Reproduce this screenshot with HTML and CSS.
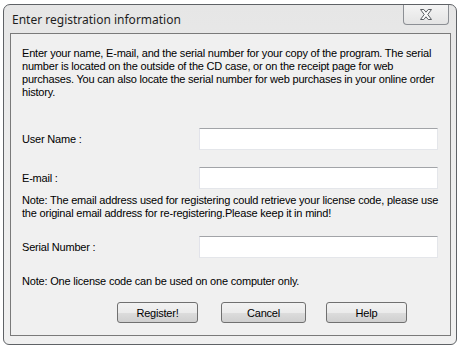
FILE: index.html
```html
<!DOCTYPE html>
<html>
<head>
    <title>Enter registration information</title>
    <link rel="stylesheet" href="styles.css">
</head>
<body>
    <div class="window">
        <div class="titlebar">
            <span class="title">Enter registration information</span>
            <div class="close-btn">
                <svg width="14" height="11" viewBox="0 0 14 11">
                    <path d="M1.5 0.5 H4.8 L7 3.2 L9.2 0.5 H12.5 L8.8 5.5 L12.5 10.5 H9.2 L7 7.8 L4.8 10.5 H1.5 L5.2 5.5 Z" fill="#fafafa" stroke="#5a5e63" stroke-width="1"/>
                </svg>
            </div>
        </div>

        <div class="client">
            <p class="intro">Enter your name, E-mail, and the serial number for your copy of the program. The serial number is located on the outside of the CD case, or on the receipt page for web purchases. You can also locate the serial number for web purchases in your online order history.</p>

            <div class="field-row first">
                <label for="username">User Name :</label>
                <input type="text" id="username">
            </div>

            <div class="field-row">
                <label for="email">E-mail :</label>
                <input type="text" id="email">
            </div>
            <p class="note">Note: The email address used for registering could retrieve your license code, please use the original email address for re-registering.Please keep it in mind!</p>

            <div class="field-row serial">
                <label for="serial">Serial Number :</label>
                <input type="text" id="serial">
            </div>
            <p class="note single">Note: One license code can be used on one computer only.</p>

            <div class="buttons">
                <button class="btn-register">Register!</button>
                <button class="btn-cancel">Cancel</button>
                <button class="btn-help">Help</button>
            </div>
        </div>
    </div>
</body>
</html>
```

FILE: styles.css
```css
body {
    margin: 0;
    background-color: #fff;
    font-family: "Liberation Sans", Arial, sans-serif;
    font-size: 11px;
    letter-spacing: -0.2px;
    color: #000;
}
.window {
    margin: 4px 0 0 3px;
    width: 454px;
    height: 341px;
    box-sizing: border-box;
    border: 1px solid #5f6266;
    border-radius: 7px 7px 6px 6px;
    background: linear-gradient(to bottom, #e6e6e6 0%, #ececec 40%, #f0f0f0 100%);
    display: flex;
    flex-direction: column;
}
.titlebar {
    height: 28px;
    display: flex;
    justify-content: space-between;
    align-items: flex-start;
}
.title {
    font-family: "Noto Sans", "Open Sans", sans-serif;
    font-size: 12px;
    letter-spacing: 0;
    color: #1e1e1e;
    padding: 6px 0 0 8px;
}
.close-btn {
    width: 46px;
    height: 20px;
    margin-right: 7px;
    box-sizing: border-box;
    border: 1px solid #8c8f94;
    border-top: none;
    border-radius: 0 0 4px 4px;
    background: linear-gradient(to bottom, #f4f4f4, #e4e4e4);
    display: flex;
    align-items: center;
    justify-content: center;
}
.client {
    flex: 1;
    margin: 0 5px 8px 6px;
    border: 1px solid #7a7a7a;
    background-color: #f0f0f0;
    padding: 13px 11px 0 11px;
}
.intro {
    margin: 0;
    line-height: 13px;
}
.field-row {
    display: flex;
    align-items: center;
    height: 22px;
}
.field-row.first {
    margin-top: 29px;
}
.field-row + .field-row {
    margin-top: 17px;
}
.field-row.serial {
    margin-top: 16px;
}
label {
    width: 177px;
}
input {
    width: 239px;
    height: 22px;
    box-sizing: border-box;
    margin: 0;
    border: 1px solid;
    border-color: #a2a4a8 #e4e6ea #e4e6ea #e2e3ea;
    background-color: #fff;
}
.note {
    margin: 5px 0 0 0;
    line-height: 13px;
}
.note.single {
    margin-top: 17px;
}
.buttons {
    display: flex;
    margin: 14px 0 0 95px;
}
button {
    height: 21px;
    box-sizing: border-box;
    border: 1px solid #707070;
    border-radius: 3px;
    background: linear-gradient(to bottom, #f2f2f2 0%, #ebebeb 50%, #dddddd 50%, #cfcfcf 100%);
    font-family: "Liberation Sans", Arial, sans-serif;
    font-size: 11px;
    letter-spacing: -0.2px;
    color: #000;
    padding: 0;
}
.btn-register {
    width: 81px;
}
.btn-cancel {
    width: 85px;
    margin-left: 23px;
}
.btn-help {
    width: 81px;
    margin-left: 20px;
}
```
